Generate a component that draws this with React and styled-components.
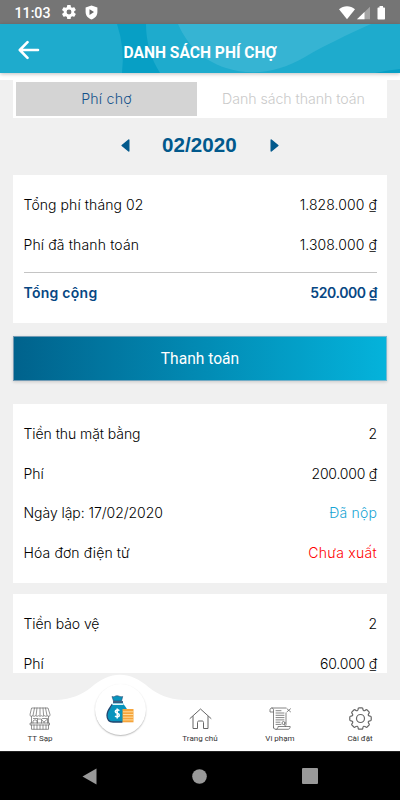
import React from 'react';
import styled, { createGlobalStyle } from 'styled-components';

const Global = createGlobalStyle`
  * { box-sizing: border-box; }
  body { margin: 0; background: #f0f0f0; font-family: Inter, "Liberation Sans", sans-serif; }
`;

const Screen = styled.div`
  width: 400px;
  height: 800px;
  display: flex;
  flex-direction: column;
  overflow: hidden;
  background: #f0f0f0;
`;

const StatusBar = styled.div`
  flex: 0 0 24px;
  background: #757575;
  color: #fff;
  display: flex;
  align-items: center;
  padding: 1px 14px 0 14.5px;
  font: 500 14.2px Roboto, sans-serif;
`;
const Clock = styled.span`width: 47.5px; padding-top: 1px;`;
const LeftIcons = styled.div`display: flex; gap: 9px; flex: 1;`;

const Header = styled.header`
  flex: 0 0 49px;
  position: relative;
  z-index: 1;
  background: #1eabcd;
  box-shadow: 0 1px 4px rgba(0, 0, 0, 0.26);
  display: flex;
  align-items: center;
`;
const Waves = styled.svg`position: absolute; inset: 0;`;
const BackButton = styled.button`
  position: relative;
  border: 0;
  padding: 0;
  background: none;
  margin: 3px 0 0 18px;
  width: 22px;
  height: 20px;
  display: flex;
`;
const Title = styled.h1`
  position: relative;
  margin: 9px 40px 0 0;
  flex: 1;
  text-align: center;
  color: #fff;
  font: 700 15.6px/20px Roboto, sans-serif;
`;

const Strip = styled.div`flex: 0 0 7px; background: #fff;`;

const Content = styled.main`
  flex: 0 0 593px;
  overflow: hidden;
  padding: 0 13px;
`;
const Tabs = styled.div`
  height: 38px;
  background: #fff;
  display: flex;
  padding: 2px 3px;
`;
const Tab = styled.div`
  flex: ${(p) => (p.$active ? '0 0 181px' : '1')};
  padding-left: ${(p) => (p.$active ? 0 : '6px')};
  background: ${(p) => (p.$active ? '#d4d4d4' : '#fff')};
  color: ${(p) => (p.$active ? '#15528b' : '#cacaca')};
  text-align: center;
  font-size: 14.2px;
  font-weight: 300;
  letter-spacing: ${(p) => (p.$active ? '0.2px' : '-0.06px')};
  line-height: 34px;
`;
const MonthPicker = styled.div`
  height: 57px;
  padding-bottom: 3px;
  display: flex;
  align-items: center;
  justify-content: center;
  gap: 32px;
  color: #02598c;
`;
const Month = styled.strong`
  font: 700 20.6px "Liberation Sans", sans-serif;
  width: 76px;
  white-space: nowrap;
  letter-spacing: 0.05px;
`;

const Card = styled.section`
  background: #fff;
  height: ${(p) => p.$height}px;
  padding: 10px 10px 0;
  margin-bottom: ${(p) => p.$gap || 0}px;
`;
const Row = styled.div`
  height: 39.6px;
  padding-left: 0.5px;
  display: flex;
  justify-content: space-between;
  align-items: center;
  font-size: 14px;
  font-weight: ${(p) => (p.$strong ? 600 : 300)};
  color: ${(p) => (p.$strong ? '#074783' : '#000')};
`;
const Label = styled.span`
  letter-spacing: ${(p) => p.$track || 0}px;
`;
const Value = styled.span`
  color: ${(p) => p.$color || 'inherit'};
  letter-spacing: ${(p) => p.$track || 0}px;
`;
const Divider = styled.hr`
  border: 0;
  height: 1px;
  background: #c4c4c4;
  margin: 8px 0 0 1px;
`;
const PayButton = styled.button`
  display: block;
  width: 100%;
  height: 45px;
  margin: 0 0 23px;
  padding: 0;
  border: 1px solid rgba(190, 190, 205, 0.6);
  background: linear-gradient(90deg, #00628c, #04b3db) border-box;
  box-shadow: 0 1px 3px rgba(0, 0, 0, 0.16);
  color: #fff;
  font: 400 15.6px Roboto, sans-serif;
`;

const BottomNav = styled.nav`
  flex: 0 0 78px;
  position: relative;
  display: grid;
  grid-template-columns: repeat(5, 80px);
  align-items: end;
`;
const NavShape = styled.svg`position: absolute; inset: 0;`;
const NavItem = styled.div`
  position: relative;
  height: 51px;
  padding-top: 7px;
  display: flex;
  flex-direction: column;
  align-items: center;
  gap: 3px;
  color: #333;
  font: 400 8px/11px Roboto, sans-serif;
`;
const FloatingItem = styled.div`
  position: relative;
  height: 51px;
  margin-bottom: 16.5px;
  width: 51px;
  justify-self: center;
  border-radius: 50%;
  background: #fff;
  box-shadow: 0 1px 1.5px rgba(0, 0, 0, 0.28);
  display: flex;
  align-items: center;
  justify-content: center;
`;

const SystemBar = styled.div`
  flex: 0 0 49px;
  background: #000;
  border-top: 1px solid #222;
  display: flex;
  align-items: center;
  justify-content: center;
  gap: 95px;
`;

const GearSolid = () => (
  <svg width="14" height="14" viewBox="2 2 20 20" fill="#fff">
    <path d="M19.4 13a7.5 7.5 0 0 0 0-2l2.1-1.6c.2-.2.2-.4.1-.7l-2-3.4c-.1-.2-.4-.3-.6-.2l-2.5 1a7 7 0 0 0-1.7-1l-.4-2.6a.5.5 0 0 0-.5-.5h-4a.5.5 0 0 0-.5.5L9 5.1a8 8 0 0 0-1.7 1l-2.5-1c-.2-.1-.5 0-.6.2l-2 3.4c-.1.3 0 .5.1.7L4.5 11a8 8 0 0 0 0 2l-2.2 1.6c-.1.2-.2.4-.1.7l2 3.4c.1.2.4.3.6.2l2.5-1a7 7 0 0 0 1.7 1l.4 2.6c0 .3.2.5.5.5h4c.3 0 .5-.2.5-.5l.4-2.6a7 7 0 0 0 1.7-1l2.5 1c.2.1.5 0 .6-.2l2-3.4c.1-.3.1-.5-.1-.7zM12 15.500a3.500 3.500 0 1 1 0-7 3.500 3.500 0 0 1 0 7z" />
  </svg>
);
const Shield = () => (
  <svg width="13" height="15" viewBox="0 0 13 15">
    <path d="M6.5.4 12.4 2.6V7c0 3.600-2.500 6.400-5.900 7.500C3.100 13.400.6 10.600.6 7V2.600z" fill="#fff" />
    <path d="M4.500 4.300v5.600L9 7.100z" fill="#666" />
  </svg>
);
const Signals = () => (
  <svg width="48" height="16" viewBox="0 0 48 16">
    <path d="M1 4.200C5.500.3 12.500.3 17 4.200L9 14.200z" fill="#fff" />
    <path d="M19 14.300 32 1.800v12.500z" fill="#a4a4a4" />
    <path d="M19 14.300 26.500 7v7.300z" fill="#fff" />
    <path d="M41.500 1h3.500v1.500h1c.7 0 1 .4 1 1v10c0 .7-.3 1-1 1h-5.500c-.7 0-1-.3-1-1v-10c0-.6.3-1 1-1h1z" fill="#fff" />
  </svg>
);
const Arrow = ({ right }) => (
  <svg width="9" height="13" viewBox="0 0 9 13">
    <path d={right ? 'M1.200 1v11L7.900 6.500z' : 'M7.800 1v11L1.100 6.500z'} fill="currentColor" stroke="currentColor" strokeWidth="1.400" strokeLinejoin="round" />
  </svg>
);
const line = { fill: 'none', stroke: '#666', strokeWidth: 0.8, strokeLinejoin: 'round', strokeLinecap: 'round' };
const ShopIcon = () => (
  <svg width="22" height="23" viewBox="0 0 22 23" {...line} strokeWidth="0.7">
    <path d="M3 1h16l2 6.500v1.200c-.8.700-2 .7-2.800 0-.8.700-2 .7-2.900 0-.8.700-2 .7-2.900 0-.8.700-2 .7-2.900 0-.8.700-2 .7-2.900 0-.8.700-2 .7-2.800 0-.8.700-2 .7-2.700 0V7.500zM5.500 1 4 8.500M8 1l-.9 7.500M11 1v7.500M14 1l.6 7.500M16.500 1 18 8.500" />
    <path d="M2.500 9.500V16M19.500 9.500V16M1.500 16h19v2h-19zM2.500 18v4.300h17V18M5 18v4M8 18v4M11 18v4M14 18v4M17 18v4M4 16v-2c1-1.500 3-1.500 4 0v2M8.500 16v-4h4v4M13 13l2.500 3M13.500 11.500h5v4.500M15 15l3-2.500M4.500 11.500h4" />
  </svg>
);
const MoneyIcon = () => (
  <svg width="28" height="28" viewBox="0 0 28 28">
    <path d="M7.400 7.500h9.400c1.500 4 5.900 6 5.900 13.500 0 4-2 6-5 6H7c-4 0-6-2.700-6-6.700C1 15 6 11.500 7.400 7.500z" fill="#0994bd" />
    <path d="M6.300 9C4.500 12.500 1 15 1 20.300c0 4 2 6.700 6 6.700h9.500" fill="none" stroke="#21466f" strokeWidth="1.300" />
    <path d="M6 1.500c2 1 3-.8 5-.8s3.500 1.700 5.700.8L15.500 6h-8z" fill="#0994bd" stroke="#21466f" strokeWidth=".6" />
    <path d="M7 7h10" stroke="#21466f" strokeWidth="1.600" />
    <path d="M6.500 9.200h11" stroke="#e6f7fb" strokeWidth="1.600" />
    <path d="M13.300 15.700c-1-1.200-4-1.200-4 .8 0 2.200 4 1.300 4 3.700 0 2.100-3.200 2-4.200.8M11.200 13.500v10" stroke="#fff" strokeWidth="1.500" fill="none" />
    <rect x="16.500" y="14" width="11" height="13.300" fill="#f6a43a" />
    <path d="M17 16.800h10.500M17 19.500h10.500M17 22.200h10.500M17 24.900h10.500" stroke="#ffe1a6" strokeWidth=".9" />
  </svg>
);
const HomeIcon = () => (
  <svg width="23" height="23" viewBox="0 0 23 23" {...line} strokeWidth="1">
    <path d="m1 11.500 10.500-9.500L22 11.500M4 9.500V21.500h4.500v-6c0-1 .5-1.500 1.500-1.500h3c1 0 1.500.5 1.500 1.500v6H19V9.500" />
  </svg>
);
const ScrollIcon = () => (
  <svg width="24" height="23" viewBox="0 0 24 23" {...line}>
    <path d="M5.500 5H2V3c0-1.200.7-2 1.800-2H18M5.500 21V3c0-1.200-.5-2-1.700-2M18 6v12M5.500 20c0 1.500 1 2.300 2.500 2.300h12c1.300 0 2.200-1 2.200-2.800H10c0 1.800-.7 2.800-2 2.800M8 3.700h5M8 6h8M8 8.300h8M8 10.600h8M8 12.900h8M8 15.200h4M8 17.400h5" />
    <circle cx="15.500" cy="16" r="1.500" />
    <path d="m19 1.800 3.500 3M22.500 1.800l-3.500 3M16.500 17.500l1 2" />
  </svg>
);

const polar = (radius, degrees) => {
  const a = (degrees * Math.PI) / 180;
  return `${(11.5 + radius * Math.cos(a)).toFixed(2)} ${(11.5 + radius * Math.sin(a)).toFixed(2)}`;
};
const cogPath = Array.from({ length: 8 }, (_, i) => {
  const c = i * 45;
  return `${i ? 'L' : 'M'}${polar(9.6, c - 14)}Q${polar(10.9, c - 13)} ${polar(10.8, c - 7)}L${polar(10.8, c + 7)}Q${polar(10.9, c + 13)} ${polar(9.6, c + 14)}Q${polar(7.400, c + 22.5)} ${polar(9.6, c + 31)}`;
}).join('') + 'Z';
const CogIcon = () => (
  <svg width="23" height="23" viewBox="0 0 23 23" {...line} strokeWidth="1.200">
    <circle cx="11.500" cy="11.500" r="4" />
    <path d={cogPath} />
  </svg>
);

const Line = ({ label, value, color, strong, track, valueTrack }) => (
  <Row $strong={strong}>
    <Label $track={track}>{label}</Label>
    <Value $color={color} $track={valueTrack}>{value}</Value>
  </Row>
);

export default function App() {
  return (
    <Screen>
      <Global />
      <StatusBar>
        <Clock>11:03</Clock>
        <LeftIcons><GearSolid /><Shield /></LeftIcons>
        <Signals />
      </StatusBar>
      <Header>
        <Waves width="400" height="49" viewBox="0 0 400 49">
          <path d="M117 0q8 24 5 49h38q-14-22-14-49z" fill="#079fc5" />
          <path d="M178 0c10 22 24 36 48 44 24 8 52 5 79-11 20-12 42-22 66-33z" fill="#36b4d3" />
          <path d="M375 49q14-3 25-4v4z" fill="#079fc5" />
        </Waves>
        <BackButton aria-label="Quay lại">
          <svg width="22" height="20" viewBox="0 0 22 20" fill="none" stroke="#fff" strokeWidth="2.600" strokeLinecap="round" strokeLinejoin="round">
            <path d="M20 10H2M9.500 2.200 1.800 10l7.700 7.800" />
          </svg>
        </BackButton>
        <Title>DANH SÁCH PHÍ CHỢ</Title>
      </Header>
      <Strip />
      <Content>
        <Tabs>
          <Tab $active>Phí chợ</Tab>
          <Tab>Danh sách thanh toán</Tab>
        </Tabs>
        <MonthPicker>
          <Arrow />
          <Month>02/2020</Month>
          <Arrow right />
        </MonthPicker>
        <Card $height={148} $gap={13}>
          <Line label="Tổng phí tháng 02" value="1.828.000 ₫" track={0.08} valueTrack={0.08} />
          <Line label="Phí đã thanh toán" value="1.308.000 ₫" track={0.14} valueTrack={0.08} />
          <Divider />
          <Line strong label="Tổng cộng" value="520.000 ₫" track={0.27} valueTrack={-0.42} />
        </Card>
        <PayButton>Thanh toán</PayButton>
        <Card $height={179} $gap={11}>
          <Line label="Tiền thu mặt bằng" value="2" track={-0.06} />
          <Line label="Phí" value="200.000 ₫" valueTrack={-0.22} />
          <Line label="Ngày lập: 17/02/2020" value="Đã nộp" color="#17a5d5" track={-0.05} valueTrack={0.18} />
          <Line label="Hóa đơn điện tử" value="Chưa xuất" color="#f00" track={0.12} valueTrack={0.27} />
        </Card>
        <Card $height={179}>
          <Line label="Tiền bảo vệ" value="2" track={-0.06} />
          <Line label="Phí" value="60.000 ₫" valueTrack={-0.2} />
        </Card>
      </Content>
      <BottomNav>
        <NavShape width="400" height="78" viewBox="0 0 400 78">
          <path d="M0 27h57c15-1 24-5 34-12.500 19-17 39-17 58 0 10 7.500 19 11.500 34 12.500h217v51H0z" fill="#fff" />
        </NavShape>
        <NavItem><ShopIcon />TT Sạp</NavItem>
        <FloatingItem><MoneyIcon /></FloatingItem>
        <NavItem><HomeIcon />Trang chủ</NavItem>
        <NavItem><ScrollIcon />Vi phạm</NavItem>
        <NavItem><CogIcon />Cài đặt</NavItem>
      </BottomNav>
      <SystemBar>
        <svg width="15" height="17" viewBox="0 0 15 17"><path d="M14.500.5v16L.5 8.500z" fill="#999" /></svg>
        <svg width="15" height="15" viewBox="0 0 15 15"><circle cx="7.500" cy="7.500" r="7.300" fill="#999" /></svg>
        <svg width="16" height="16" viewBox="0 0 16 16"><rect width="16" height="16" rx="1" fill="#999" /></svg>
      </SystemBar>
    </Screen>
  );
}
